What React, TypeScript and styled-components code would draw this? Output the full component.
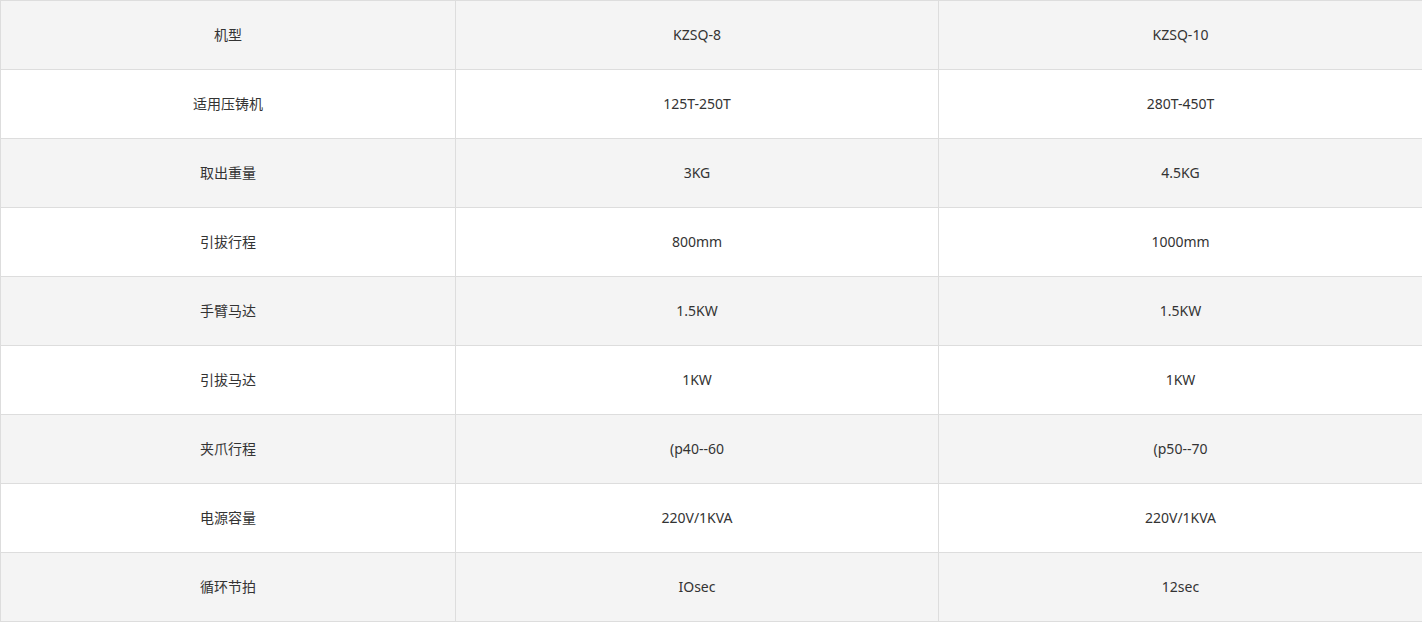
import React from 'react';
import styled, { createGlobalStyle } from 'styled-components';

const GlobalStyle = createGlobalStyle`
  html, body { margin: 0; padding: 0; background: #fff; }
  body { font-family: "Noto Sans", "Noto Sans CJK SC", sans-serif; }
`;

const SpecTable = styled.table`
  width: 1422px;
  border-collapse: collapse;
  table-layout: fixed;
  font-size: 14px;
  color: #333;
`;

const Col = styled.col<{ $w: number }>`
  width: ${p => p.$w}px;
`;

const Row = styled.tr<{ $shaded: boolean }>`
  height: 69px;
  background: ${p => (p.$shaded ? '#f4f4f4' : '#fff')};
`;

const Cell = styled.td`
  border: 1px solid #dddddd;
  text-align: center;
  vertical-align: middle;
  padding: 0;
  line-height: 20px;
`;

const rows: [string, string, string][] = [
  ['机型', 'KZSQ-8', 'KZSQ-10'],
  ['适用压铸机', '125T-250T', '280T-450T'],
  ['取出重量', '3KG', '4.5KG'],
  ['引拔行程', '800mm', '1000mm'],
  ['手臂马达', '1.5KW', '1.5KW'],
  ['引拔马达', '1KW', '1KW'],
  ['夹爪行程', '(p40--60', '(p50--70'],
  ['电源容量', '220V/1KVA', '220V/1KVA'],
  ['循环节拍', 'IOsec', '12sec'],
];

const colWidths = [455, 483, 484];

export default function App() {
  return (
    <>
      <GlobalStyle />
      <SpecTable>
        <colgroup>
          {colWidths.map((w, i) => (
            <Col key={i} $w={w} />
          ))}
        </colgroup>
        <tbody>
          {rows.map((r, i) => (
            <Row key={i} $shaded={i % 2 === 0}>
              {r.map((c, j) => (
                <Cell key={j}>{c}</Cell>
              ))}
            </Row>
          ))}
        </tbody>
      </SpecTable>
    </>
  );
}
